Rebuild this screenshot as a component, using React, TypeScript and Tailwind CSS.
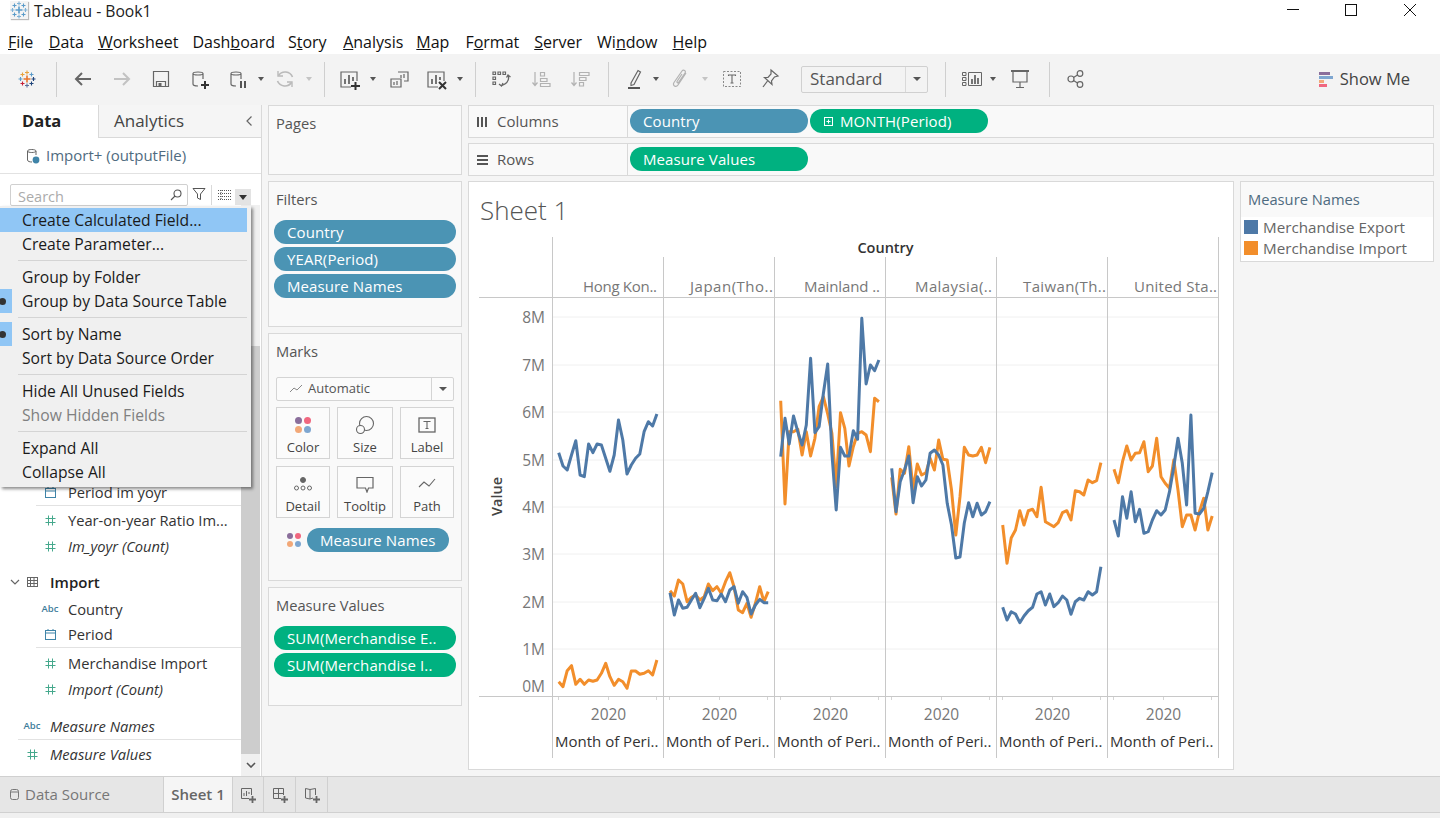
import type { ReactNode } from "react";

const blue = "#4e79a7";
const orange = "#f28e2b";

const panes = [
  {
    x0: 558.7,
    name: "Hong Kon..",
    start: 583,
    end: 657,
    orange: [681.7, 686.7, 670.7, 665.7, 684.3, 679.3, 684.3, 680, 681.3, 680, 673.3, 663.3, 676.7, 685.3, 679.3, 681.7, 688.3, 671, 671, 674.3, 673.3, 670.7, 675, 660],
    blue: [452.7, 466, 470, 455, 440.7, 475, 476.7, 444, 452.7, 444, 445, 458.3, 471.3, 455, 420, 440, 474, 465, 458.3, 454, 431.7, 421.7, 426, 414],
  },
  {
    x0: 670,
    name: "Japan(Tho..",
    start: 690,
    end: 773,
    orange: [590.7, 596, 580, 584, 601.7, 597.3, 595, 600, 596.7, 584, 590.7, 586.7, 593.3, 581.7, 572.7, 586.7, 610, 612.7, 603.3, 617.3, 603.3, 586.7, 601.7, 591.7],
    blue: [592.7, 615, 600, 608.3, 607.3, 600, 593.3, 607.7, 598.3, 588.3, 600, 600.7, 594, 601.7, 590, 586.7, 603.3, 591.7, 597.3, 614, 605, 599.3, 602.7, 602.7],
  },
  {
    x0: 780.7,
    name: "Mainland ..",
    start: 804,
    end: 880,
    orange: [400.7, 504, 431.7, 431.7, 429.3, 455, 431.7, 456, 438.3, 406.7, 396.7, 414, 433.3, 486.7, 412.7, 428.3, 466, 446.7, 433.3, 431.7, 435, 451.7, 398.3, 401.7],
    blue: [456.7, 418.3, 444, 416, 431.7, 445, 425, 358.3, 432.7, 426.7, 393.3, 364, 453.3, 510, 447.3, 456, 456, 430.7, 439.3, 318.3, 384, 365, 370.7, 360],
  },
  {
    x0: 891.7,
    name: "Malaysia(..",
    start: 915,
    end: 992,
    orange: [477.3, 514, 469.3, 473.3, 446.7, 490, 464, 475, 472.7, 458.3, 470, 440, 459.3, 460, 490, 535, 496.7, 447.3, 455, 456, 455, 447.3, 462.7, 447.3],
    blue: [468.3, 511.7, 481.7, 470, 456, 502.7, 476.7, 486, 480, 453.3, 450, 455, 465, 503.3, 525, 558, 557, 523, 502.7, 516.7, 503.3, 515, 511.7, 501.7],
  },
  {
    x0: 1002.7,
    name: "Taiwan(Th..",
    start: 1023,
    end: 1106,
    orange: [525, 563.3, 538, 530, 510.7, 525, 510.7, 509.3, 516.7, 487.3, 521.7, 524.3, 526.7, 522.7, 512.7, 510.7, 520, 490.7, 491.7, 495, 480, 482.7, 480.7, 462.7],
    blue: [607.3, 620, 611.7, 614, 622.7, 616, 610.7, 607.3, 594, 591.7, 605, 594, 606.7, 602.7, 596, 600, 614.3, 601.7, 598.3, 600, 591.7, 595, 591.7, 566.7],
  },
  {
    x0: 1114,
    name: "United Sta..",
    start: 1134,
    end: 1217,
    orange: [469.3, 482.7, 461.7, 446, 460, 453.3, 452.7, 441.7, 471.7, 466, 438.3, 476.7, 483.3, 488.3, 460, 490, 526.7, 515, 515, 530, 511.7, 498.3, 530, 516],
    blue: [520, 536, 496.7, 518.3, 491.7, 521.7, 509.3, 533.3, 531.7, 520, 510.7, 515, 510, 491.7, 466.7, 438.3, 463.3, 505, 415, 513.3, 514, 508.3, 491.7, 472.7],
  },
];

const yAxis = [
  ["8M", 322],
  ["7M", 370],
  ["6M", 417],
  ["5M", 465],
  ["4M", 512],
  ["3M", 559],
  ["2M", 607],
  ["1M", 654],
  ["0M", 691],
] as const;

const points = (x0: number, ys: number[]) =>
  ys.map((y, i) => `${(x0 + i * 4.27).toFixed(1)},${y}`).join(" ");

const Cross = ({ x, y, s, c }: { x: number; y: number; s: number; c: string }) => (
  <path d={`M${x - s} ${y}H${x + s}M${x} ${y - s}V${y + s}`} stroke={c} strokeWidth={s > 2.5 ? 1.6 : 1.1} fill="none" />
);

const TableauLogo = ({ mono }: { mono?: boolean }) => (
  <svg width="18" height="18" viewBox="0 0 18 18">
    <Cross x={9} y={9} s={3.5} c={mono ? "#5a9bc9" : "#e8762c"} />
    <Cross x={9} y={2.5} s={2} c={mono ? "#7fb2d6" : "#e8a33d"} />
    <Cross x={9} y={15.5} s={2} c={mono ? "#7fb2d6" : "#5b6f9b"} />
    <Cross x={2.5} y={9} s={2} c={mono ? "#7fb2d6" : "#5a9bc9"} />
    <Cross x={15.5} y={9} s={2} c={mono ? "#7fb2d6" : "#1f447b"} />
    <Cross x={4.5} y={4.5} s={2} c={mono ? "#5a9bc9" : "#e8a33d"} />
    <Cross x={13.5} y={4.5} s={2} c={mono ? "#5a9bc9" : "#5a9bc9"} />
    <Cross x={4.5} y={13.5} s={2} c={mono ? "#5a9bc9" : "#c72037"} />
    <Cross x={13.5} y={13.5} s={2} c={mono ? "#5a9bc9" : "#1f447b"} />
  </svg>
);

const Ic = ({ children, w = 24, o = 1 }: { children: ReactNode; w?: number; o?: number }) => (
  <svg width={w} height="24" viewBox={`0 0 ${w} 24`} fill="none" stroke="#666" strokeWidth="1.2" opacity={o} className="shrink-0">
    {children}
  </svg>
);

const Arrow = ({ ml, faded }: { ml: string; faded?: boolean }) => (
  <span className={`${ml} w-2 flex justify-center`}>
    <span className={`w-0 h-0 border-x-[3.5px] border-x-transparent border-t-[4px] ${faded ? "border-t-[#c4c4c4]" : "border-t-[#555]"}`} />
  </span>
);

const Sep = ({ ml }: { ml: string }) => <span className={`${ml} w-px h-[35px] bg-[#cfcfcf]`} />;

const DbIcon = ({ children }: { children: ReactNode }) => (
  <Ic>
    <path d="M5 6.5C5 4.5 15 4.5 15 6.5V12M5 6.5C5 8.5 15 8.5 15 6.5M5 6.5V17C5 18.5 7 19 10 19" />
    {children}
  </Ic>
);

const Menu = () => {
  const Item = ({ t, on, dim, mark }: { t: string; on?: boolean; dim?: boolean; mark?: boolean }) => (
    <div className={`relative h-6 pl-[22px] pt-[2px] flex items-center text-[15.7px] ${on ? "bg-[#90c6f5] mr-1" : ""} ${dim ? "text-[#808080]" : "text-[#1a1a1a]"}`}>
      {mark && (
        <span className="absolute left-0 top-0 w-3 h-6 bg-[#90c6f5] flex items-center">
          <span className="w-[7px] h-[7px] -ml-[1px] rounded-full bg-[#333]" />
        </span>
      )}
      {t}
    </div>
  );
  const Line = () => <div className="h-px bg-[#d4d4d4] ml-[18px] mr-[4px] my-[4px]" />;
  return (
    <div className="absolute left-0 top-[101px] w-[251px] h-[281px] z-20 bg-[#f0f0f0] pt-[2px] shadow-[2px_2px_3px_rgba(0,0,0,0.45)] leading-none">
      <Item t="Create Calculated Field..." on />
      <Item t="Create Parameter..." />
      <Line />
      <Item t="Group by Folder" />
      <Item t="Group by Data Source Table" mark />
      <Line />
      <Item t="Sort by Name" mark />
      <Item t="Sort by Data Source Order" />
      <Line />
      <Item t="Hide All Unused Fields" />
      <Item t="Show Hidden Fields" dim />
      <Line />
      <Item t="Expand All" />
      <Item t="Collapse All" />
    </div>
  );
};

const TypeIcon = ({ type }: { type: string }) => {
  if (type === "abc") return <span className="text-[9.5px] font-semibold text-[#3f7d9b]">Abc</span>;
  if (type === "date")
    return (
      <svg width="11" height="11" viewBox="0 0 11 11" fill="none" stroke="#3f84a8">
        <rect x="0.5" y="1.5" width="10" height="9" />
        <path d="M0.5 4H10.5M3 0V2M8 0V2" />
      </svg>
    );
  return (
    <svg width="11" height="11" viewBox="0 0 11 11" fill="none" stroke="#45a88c">
      <path d="M0.5 3.5H10.5M0.5 7.5H10.5M3.5 0.5V10.5M7.5 0.5V10.5" />
    </svg>
  );
};

const Field = ({ type, name, italic, line, indent = true }: { type: string; name: string; italic?: boolean; line?: boolean; indent?: boolean }) => (
  <div className={`h-[26px] flex items-center border-[#e2e2e2] ${indent ? "ml-9" : "ml-[18px]"} ${line ? "border-b" : ""}`}>
    <span className="ml-[3px] w-[22px] flex justify-center">
      <TypeIcon type={type} />
    </span>
    <span className={`ml-[7px] text-[14.7px] text-[#333] whitespace-nowrap ${italic ? "italic" : ""}`}>{name}</span>
  </div>
);

const DataPanel = () => (
  <div className="relative w-[262px] h-full bg-white border-r border-[#d9d9d9] flex flex-col shrink-0">
    <div className="h-[33px] flex shrink-0">
      <div className="w-[98px] pl-[22px] flex items-center text-[16.5px] font-bold text-[#222]">Data</div>
      <div className="flex-1 flex items-center justify-between pl-[15px] pr-2 bg-[#f5f5f5] border-l border-b border-[#d9d9d9] text-[17px] text-[#444]">
        Analytics
        <svg width="8" height="12" viewBox="0 0 8 12" fill="none" stroke="#666" strokeWidth="1.2">
          <path d="M6.5 1.5L2 6L6.5 10.5" />
        </svg>
      </div>
    </div>
    <div className="h-9 shrink-0 border-b border-[#e2e2e2] flex items-center pl-[26px] text-[15px] text-[#4f6b80]">
      <svg width="14" height="16" viewBox="0 0 14 16" fill="none" stroke="#666" className="mr-[6px]">
        <path d="M1.5 3C1.5 1 10 1 10 3V7M1.5 3C1.5 5 10 5 10 3M1.5 3V12C1.5 13.5 4 14 6 14" />
        <circle cx="10" cy="12" r="3.4" fill="#3f84a8" stroke="none" />
      </svg>
      Import+ (outputFile)
    </div>
    <div className="mt-[10px] h-[21px] shrink-0 flex items-start pl-[10px]">
      <div className="w-[178px] h-[22px] border border-[#d0d0d0] rounded-[2px] pl-[7px] pr-[5px] flex items-center justify-between text-[14.5px] text-[#ababab]">
        <span className="pt-1 leading-none">Search</span>
        <svg width="12" height="12" viewBox="0 0 12 12" fill="none" stroke="#555" strokeWidth="1.1">
          <circle cx="7.5" cy="4.5" r="3.5" />
          <path d="M5 7L1 11" />
        </svg>
      </div>
      <svg width="14" height="14" viewBox="0 0 14 14" fill="none" stroke="#555" className="ml-[4px] mt-[3px]">
        <path d="M1 1.5H13L8.5 7V12.5L5.5 11V7Z" />
      </svg>
      <span className="ml-[5px] mt-[1px] w-px h-5 bg-[#d9d9d9]" />
      <svg width="13" height="10" viewBox="0 0 13 10" stroke="#555" className="ml-[6px] mt-[6px]">
        <path d="M0 .5H13M0 3.5H13M0 6.5H13M0 9.5H13M3 0V10" strokeDasharray="1 1" />
      </svg>
      <span className="ml-[4px] mt-[5px] w-4 h-4 bg-[#e3e3e3] flex justify-center pt-[6px]">
        <span className="w-0 h-0 border-x-[4px] border-x-transparent border-t-[5px] border-t-[#333]" />
      </span>
    </div>
    <div className="flex-1 flex min-h-0">
      <div className="w-[241px] pt-[275px]">
        <Field type="date" name="Period im yoyr" line />
        <div className="h-px" />
        <Field type="num" name="Year-on-year Ratio Im..." />
        <Field type="num" name="Im_yoyr (Count)" italic />
        <div className="h-[10px]" />
        <div className="h-[26px] flex items-center pl-[10px]">
          <svg width="10" height="6" viewBox="0 0 10 6" fill="none" stroke="#666" strokeWidth="1.2">
            <path d="M1 1L5 5L9 1" />
          </svg>
          <svg width="11" height="10" viewBox="0 0 11 10" fill="none" stroke="#666" className="ml-[7px]">
            <rect x="0.5" y="0.5" width="10" height="9" />
            <path d="M0.5 3.5H10.5M0.5 6.5H10.5M3.5 .5V9.5M7 .5V9.5" />
          </svg>
          <span className="ml-3 text-[15px] font-semibold text-[#222]">Import</span>
        </div>
        <div className="h-px" />
        <Field type="abc" name="Country" />
        <Field type="date" name="Period" line />
        <div className="h-[2px]" />
        <Field type="num" name="Merchandise Import" />
        <Field type="num" name="Import (Count)" italic />
        <div className="h-3" />
        <Field type="abc" name="Measure Names" italic indent={false} line />
        <div className="h-px" />
        <Field type="num" name="Measure Values" italic indent={false} />
      </div>
      <div className="w-[19px] bg-[#f0f0f0] flex flex-col">
        <div className="h-[141px]" />
        <div className="h-[408px] bg-[#cdcdcd]" />
        <div className="h-[21px] flex items-center justify-center">
          <svg width="10" height="6" viewBox="0 0 10 6" fill="none" stroke="#555" strokeWidth="1.6">
            <path d="M1 1L5 5L9 1" />
          </svg>
        </div>
      </div>
    </div>
    <Menu />
  </div>
);

const Pill = ({ t, green, w, children }: { t: string; green?: boolean; w: string; children?: ReactNode }) => (
  <div className={`${w} h-6 rounded-full flex items-center pl-[13px] text-[15px] tracking-[0.1px] text-white whitespace-nowrap overflow-hidden ${green ? "bg-[#00b180]" : "bg-[#4b94b4]"}`}>
    {children}
    {t}
  </div>
);

const Card = ({ title, className, children }: { title: string; className: string; children?: ReactNode }) => (
  <div className={`border border-[#d9d9d9] bg-[#f9f9f9] px-[5px] ${className}`}>
    <div className="h-[34px] pl-[2px] flex items-center text-[14.7px] text-[#555]">{title}</div>
    {children}
  </div>
);

const Dots = ({ s = 8 }: { s?: number }) => (
  <span className="grid grid-cols-2 gap-[2px]">
    {["#8a6e9b", "#f0677f", "#f2a878", "#7ea6d0"].map((c) => (
      <span key={c} className="rounded-full" style={{ width: s, height: s, background: c }} />
    ))}
  </span>
);

const MarkCell = ({ label, children }: { label: string; children: ReactNode }) => (
  <div className="h-[52px] border border-[#d4d4d4] bg-[#fbfbfb] flex flex-col items-center pt-[5px] text-[13px] leading-none text-[#444]">
    <span className="h-[24px] flex items-center">{children}</span>
    <span className="mt-1">{label}</span>
  </div>
);

const MarksCard = () => (
  <Card title="Marks" className="h-[248px]">
    <div className="mx-[2px] mt-[9px] h-6 border border-[#d4d4d4] rounded-[2px] bg-[#fbfbfb] flex items-center text-[13px] text-[#555]">
      <svg width="14" height="10" viewBox="0 0 14 10" fill="none" stroke="#888" className="ml-[12px] mr-[5px]">
        <path d="M1 8L5 4L8 6L13 1" />
      </svg>
      <span className="flex-1">Automatic</span>
      <span className="w-[22px] h-full border-l border-[#d4d4d4] flex items-center justify-center">
        <span className="w-0 h-0 border-x-[4px] border-x-transparent border-t-[4px] border-t-[#555]" />
      </span>
    </div>
    <div className="mx-[2px] mt-[6px] grid grid-cols-[54px_56px_54px] gap-[7px]">
      <MarkCell label="Color">
        <Dots s={7} />
      </MarkCell>
      <MarkCell label="Size">
        <svg width="20" height="20" viewBox="0 0 20 20" fill="none" stroke="#666" strokeWidth="1.1">
          <circle cx="11.5" cy="8.5" r="7" />
          <circle cx="5.5" cy="14.5" r="4" fill="#fbfbfb" />
        </svg>
      </MarkCell>
      <MarkCell label="Label">
        <svg width="18" height="16" viewBox="0 0 18 16" fill="none" stroke="#666" strokeWidth="1.3">
          <rect x="1" y="1" width="16" height="14" />
          <path d="M6 5V4.5H12V5M9 4.5V11.5M7.5 11.5H10.5" strokeWidth="1.1" />
        </svg>
      </MarkCell>
      <MarkCell label="Detail">
        <svg width="20" height="16" viewBox="0 0 20 16" fill="none" stroke="#666">
          <circle cx="10" cy="4" r="2.5" fill="#666" />
          <circle cx="3.5" cy="12" r="2" />
          <circle cx="10" cy="12" r="2" />
          <circle cx="16.5" cy="12" r="2" />
        </svg>
      </MarkCell>
      <MarkCell label="Tooltip">
        <svg width="18" height="17" viewBox="0 0 18 17" fill="none" stroke="#666" strokeWidth="1.2">
          <path d="M1 1.5H17V12H12.5L11 16L9.5 12H1Z" />
        </svg>
      </MarkCell>
      <MarkCell label="Path">
        <svg width="18" height="12" viewBox="0 0 18 12" fill="none" stroke="#666" strokeWidth="1.1">
          <path d="M1 9L6 4L11 8L17 1" />
        </svg>
      </MarkCell>
    </div>
    <div className="mt-[10px] flex items-center pl-[13px] gap-[6px]">
      <Dots s={6} />
      <Pill t="Measure Names" w="w-[142px]" />
    </div>
  </Card>
);

const Shelf = ({ label, icon, children }: { label: string; icon: ReactNode; children: ReactNode }) => (
  <div className="h-[33px] border border-[#d9d9d9] bg-[#f9f9f9] flex items-center">
    <div className="w-[159px] h-full border-r border-[#d9d9d9] flex items-center pl-[8px] text-[15px] text-[#555]">
      <span className="w-[20px] flex">{icon}</span>
      {label}
    </div>
    <div className="pl-[2px] -mt-px flex gap-[2px]">{children}</div>
  </div>
);

const Chart = () => (
  <svg width="764" height="538" viewBox="469 231 764 538" fontFamily="'Open Sans', sans-serif" className="block">
    {yAxis.slice(0, 8).map(([, b], i) => (
      <line key={i} x1="552" x2="1218" y1={b - 5} y2={b - 5} stroke="#f0f0f0" />
    ))}
    {[552, 1218].map((x) => (
      <line key={x} x1={x + 0.5} x2={x + 0.5} y1="237" y2="758" stroke="#c8c8c8" />
    ))}
    {[663, 774, 885, 996, 1107].map((x) => (
      <line key={x} x1={x + 0.5} x2={x + 0.5} y1="257" y2="758" stroke="#c8c8c8" />
    ))}
    <line x1="479" x2="1219" y1="297.5" y2="297.5" stroke="#c8c8c8" />
    <line x1="479" x2="1219" y1="696.5" y2="696.5" stroke="#c8c8c8" />
    <text x="885.5" y="253" textAnchor="middle" fontSize="14.5" fontWeight="600" fill="#333">
      Country
    </text>
    {yAxis.map(([t, b]) => (
      <text key={t} x="545" y={b + 0.5} textAnchor="end" fontSize="15.5" fill="#777">
        {t}
      </text>
    ))}
    <text transform="translate(502 516) rotate(-90)" fontSize="14.5" fontWeight="600" fill="#444">
      Value
    </text>
    {panes.map((p, i) => {
      const left = 552 + i * 111;
      return (
        <g key={p.name}>
          <text x={p.start} y="292" fontSize="15" fill="#777" textLength={p.end - p.start} lengthAdjust="spacing">
            {p.name}
          </text>
          <path d={`M${left + 6.5} 697V700M${left + 56.5} 697V700M${left + 104.5} 697V700`} stroke="#d4d4d4" />
          <text x={left + 56.5} y="720" textAnchor="middle" fontSize="15.5" fill="#777">
            2020
          </text>
          <text x={left + 3} y="747" fontSize="15" fill="#333">
            Month of Peri..
          </text>
          <polyline points={points(p.x0, p.orange)} fill="none" stroke={orange} strokeWidth="3" strokeLinejoin="round" />
          <polyline points={points(p.x0, p.blue)} fill="none" stroke={blue} strokeWidth="3" strokeLinejoin="round" />
        </g>
      );
    })}
  </svg>
);

const menuItems: [ReactNode, string][] = [
  [<><u>F</u>ile</>, "ml-2"],
  [<><u>D</u>ata</>, "ml-[15.5px]"],
  [<><u>W</u>orksheet</>, "ml-[14px]"],
  [<>Dash<u>b</u>oard</>, "ml-[14px]"],
  [<>S<u>t</u>ory</>, "ml-[13px]"],
  [<><u>A</u>nalysis</>, "ml-[16.5px]"],
  [<><u>M</u>ap</>, "ml-[13px]"],
  [<>F<u>o</u>rmat</>, "ml-4"],
  [<><u>S</u>erver</>, "ml-[15px]"],
  [<>Wi<u>n</u>dow</>, "ml-[15px]"],
  [<><u>H</u>elp</>, "ml-[15px]"],
];

const Toolbar = () => (
  <div className="h-[51px] bg-[#f3f3f3] flex items-center shrink-0 pl-[18px] pb-px">
    <TableauLogo />
    <Sep ml="ml-[20px]" />
    <span className="ml-[14px]">
      <Ic>
        <path d="M20 12H5M11 6L5 12L11 18" stroke="#666" strokeWidth="2" />
      </Ic>
    </span>
    <span className="ml-[15px]">
      <Ic o={0.45}>
        <path d="M4 12H19M13 6L19 12L13 18" stroke="#888" strokeWidth="2" />
      </Ic>
    </span>
    <span className="ml-[15px]">
      <Ic>
        <path d="M4.5 4.5H19.5V19.5H4.5ZM7.5 19.5V14.5H16.5V19.5" />
        <rect x="9.5" y="16" width="3" height="3" fill="#666" stroke="none" />
      </Ic>
    </span>
    <span className="ml-[15px]">
      <DbIcon>
        <path d="M13 18H21M17 14V22" strokeWidth="2" stroke="#333" />
      </DbIcon>
    </span>
    <span className="ml-[14px]">
      <DbIcon>
        <path d="M15 14V21M19 14V21" strokeWidth="2" stroke="#555" />
      </DbIcon>
    </span>
    <Arrow ml="ml-[7px]" />
    <span className="ml-[8px]">
      <Ic o={0.4}>
        <path d="M19.5 10A8 8 0 0 0 5.5 8.5M4.5 14A8 8 0 0 0 18.5 15.5" strokeWidth="1.6" />
        <path d="M5 4V9H10M19 20V15H14" strokeWidth="1.4" />
      </Ic>
    </span>
    <Arrow ml="ml-[8px]" faded />
    <Sep ml="ml-[11px]" />
    <span className="ml-[12px]">
      <Ic>
        <path d="M14 20H4V5H20V14" />
        <path d="M8 17V12M12 17V8M16 14V10" strokeWidth="1.8" />
        <path d="M14 19H23M18.5 15V23" stroke="#333" strokeWidth="2" />
      </Ic>
    </span>
    <Arrow ml="ml-[8px]" />
    <span className="ml-[10px]">
      <Ic>
        <path d="M11 5H21V14H17M4 12H14V20H4Z" />
        <path d="M14 11V8M17 11V7M7 18V15M10 18V14" />
      </Ic>
    </span>
    <span className="ml-[13px]">
      <Ic>
        <path d="M14 20H4V5H20V14" />
        <path d="M8 17V12M12 17V8M16 13V10" strokeWidth="1.8" />
        <path d="M15 15L22 22M22 15L15 22" stroke="#333" strokeWidth="2" />
      </Ic>
    </span>
    <Arrow ml="ml-[8px]" />
    <Sep ml="ml-[11px]" />
    <span className="ml-[13px]">
      <Ic>
        <path d="M4 5H6.5V7.5H4ZM9 5H11.5V7.5H9ZM14 5H16.5V7.5H14ZM4 10H6.5V12.5H4ZM4 15H6.5V17.5H4Z" />
        <path d="M19 8C20.5 12 19 16 13 18.5M10 17L12.5 19L14 16M17.5 10.5L19 8L21.5 10" strokeWidth="1.3" />
      </Ic>
    </span>
    <span className="ml-[16px]">
      <Ic o={0.6}>
        <path d="M6 5V18M3.5 15.5L6 18.5L8.5 15.5" stroke="#888" />
        <path d="M11.5 5.5H15.5V9H11.5ZM11.5 11.5H18V14.5H11.5ZM11.5 16.5H21V19.5H11.5Z" stroke="#888" />
      </Ic>
    </span>
    <span className="ml-[15px]">
      <Ic o={0.6}>
        <path d="M6 5V18M3.5 15.5L6 18.5L8.5 15.5" stroke="#888" />
        <path d="M11.5 5.5H21V8.5H11.5ZM11.5 10.5H18V13.5H11.5ZM11.5 15.5H15.5V19H11.5Z" stroke="#888" />
      </Ic>
    </span>
    <Sep ml="ml-[16px]" />
    <span className="ml-[14px]">
      <Ic>
        <path d="M8 16L15 3.5L17.5 5L11 17.5L8 18.5Z" />
        <path d="M5 21H17" stroke="#555" strokeWidth="2" />
      </Ic>
    </span>
    <Arrow ml="ml-[5px]" />
    <span className="ml-[9px]">
      <Ic o={0.45}>
        <path d="M17 6L9 18C7 21 3 18.5 5 15.5L13 4C14.5 2 17.5 4 16 6L9.5 15.5C9 16.5 7.5 15.5 8 14.5L13 7" />
      </Ic>
    </span>
    <Arrow ml="ml-[8px]" faded />
    <span className="ml-[11px]">
      <Ic>
        <path d="M3.5 4.5H20.5V19.5H3.5Z" strokeDasharray="2 1.5" stroke="#888" strokeWidth="1" />
        <path d="M8.5 9V8H15.5V9M12 8V16M10.5 16H13.5" strokeWidth="1.1" />
      </Ic>
    </span>
    <span className="ml-[13px]">
      <Ic>
        <path d="M14 3L21 9L17.5 10L14.5 14L15 17.5L7.5 10.5L11 10.5L14 7Z" />
        <path d="M10.5 14L6 20" />
      </Ic>
    </span>
    <div className="ml-[20px] w-[127px] h-[27px] border border-[#d0d0d0] rounded-[2px] flex items-center text-[17px] text-[#555]">
      <span className="flex-1 pl-[8px]">Standard</span>
      <span className="w-[22px] h-full border-l border-[#d9d9d9] flex items-center justify-center">
        <span className="w-0 h-0 border-x-[4px] border-x-transparent border-t-[4px] border-t-[#555]" />
      </span>
    </div>
    <Sep ml="ml-[17px]" />
    <span className="ml-[14px]">
      <Ic>
        <path d="M2.5 5.5H6V8.5H2.5ZM2.5 10.5H6V13.5H2.5ZM2.5 15.5H6V18.5H2.5ZM8.5 5.5H21.5V18.5H8.5Z" strokeWidth="1" />
        <path d="M12 17V12M15 17V8M18 17V11" strokeWidth="1.8" />
      </Ic>
    </span>
    <Arrow ml="ml-[5px]" />
    <span className="ml-[11px]">
      <Ic>
        <path d="M3 4H21" strokeWidth="2" />
        <path d="M5 5V15H19V5M12 15V20M8 20.5H16" />
      </Ic>
    </span>
    <Sep ml="ml-[17px]" />
    <span className="ml-[14px]">
      <Ic>
        <circle cx="7" cy="12" r="3" />
        <circle cx="16" cy="6.5" r="2.8" />
        <circle cx="16" cy="17.5" r="2.8" />
        <path d="M9.5 10.5L13.5 8M9.5 13.5L13.5 16" />
      </Ic>
    </span>
    <div className="ml-auto mr-[30px] flex items-center text-[16.5px] text-[#444]">
      <span className="flex flex-col gap-[1px] mr-[7px] w-[14px]">
        <span className="h-[3px] w-[11px] bg-[#8a6e9b]" />
        <span className="h-[3px] w-[14px] bg-[#7ea6d0]" />
        <span className="h-[3px] w-[5px] bg-[#f2a878]" />
        <span className="h-[3px] w-[8px] bg-[#f0677f]" />
      </span>
      Show Me
    </div>
  </div>
);

const App = () => {
  return (
    <div className="w-[1440px] h-[818px] overflow-hidden bg-white flex flex-col font-['Open_Sans',sans-serif]">
      <div className="h-5 flex items-center shrink-0">
        <span className="ml-[10px] mr-[6px] bg-[#f4f4f4] shadow-[1px_1px_1px_#bbb] flex">
          <TableauLogo mono />
        </span>
        <span className="pt-px text-[15.7px] leading-[18px] text-[#222]">Tableau - Book1</span>
        <svg width="153" height="20" viewBox="0 0 153 20" fill="none" stroke="#111" className="ml-auto">
          <path d="M0 9.5H12" />
          <rect x="58.5" y="4.5" width="11" height="11" strokeWidth="1" />
          <path d="M117 4L129 16M129 4L117 16" />
        </svg>
      </div>
      <div className="h-[34px] pt-[10px] flex items-center shrink-0 text-[16px] text-[#111]">
        {menuItems.map(([t, ml], i) => (
          <span key={i} className={ml}>
            {t}
          </span>
        ))}
      </div>
      <Toolbar />
      <div className="h-[671px] bg-[#f5f5f5] flex shrink-0">
        <DataPanel />
        <div className="ml-[6px] w-[194px] flex flex-col gap-[6px] shrink-0">
          <Card title="Pages" className="h-[70px]" />
          <Card title="Filters" className="h-[146px]">
            <div className="mt-1 flex flex-col gap-[3px]">
              <Pill t="Country" w="w-[182px]" />
              <Pill t="YEAR(Period)" w="w-[182px]" />
              <Pill t="Measure Names" w="w-[182px]" />
            </div>
          </Card>
          <MarksCard />
          <Card title="Measure Values" className="h-[119px]">
            <div className="mt-1 flex flex-col gap-[3px]">
              <Pill t="SUM(Merchandise E.." green w="w-[182px]" />
              <Pill t="SUM(Merchandise I.." green w="w-[182px]" />
            </div>
          </Card>
        </div>
        <div className="ml-[6px] w-[966px] flex flex-col gap-[5px] shrink-0">
          <Shelf
            label="Columns"
            icon={
              <svg width="11" height="11" viewBox="0 0 11 11" fill="#555">
                <path d="M0 1H2V11H0ZM4 1H6V11H4ZM8 1H10V11H8Z" />
              </svg>
            }
          >
            <Pill t="Country" w="w-[178px]" />
            <Pill t="MONTH(Period)" green w="w-[178px]">
              <svg width="11" height="11" viewBox="0 0 11 11" fill="none" stroke="#fff" className="mr-[6px]">
                <rect x="1.5" y="1.5" width="8" height="8" />
                <path d="M3.5 5.5H7.5M5.5 3.5V7.5" />
              </svg>
            </Pill>
          </Shelf>
          <Shelf
            label="Rows"
            icon={
              <svg width="11" height="11" viewBox="0 0 11 11" fill="#555">
                <path d="M0 1H11V3H0ZM0 5H11V7H0ZM0 9H11V11H0Z" />
              </svg>
            }
          >
            <Pill t="Measure Values" green w="w-[178px]" />
          </Shelf>
          <div className="flex gap-[6px] items-start">
            <div className="w-[766px] h-[589px] bg-white border border-[#d9d9d9]">
              <div className="h-[49px] pl-[11px] pb-1 flex items-end text-[26px] leading-[34px] font-light text-[#555]">Sheet 1</div>
              <Chart />
            </div>
            <div className="w-[194px] h-[81px] bg-white border border-[#d9d9d9]">
              <div className="h-[35px] bg-[#f9f9f9] pl-[7px] flex items-center text-[14.7px] text-[#4f6b80]">Measure Names</div>
              <div className="pl-[3px] text-[15.2px] text-[#666] flex flex-col gap-[1px]">
                <div className="h-5 flex items-center gap-[5px]">
                  <span className="w-[14px] h-[14px] bg-[#4e79a7]" />
                  Merchandise Export
                </div>
                <div className="h-5 flex items-center gap-[5px]">
                  <span className="w-[14px] h-[14px] bg-[#f28e2b]" />
                  Merchandise Import
                </div>
              </div>
            </div>
          </div>
        </div>
      </div>
      <div className="h-[37px] bg-[#e6e6e6] border-t border-b border-[#d0d0d0] flex shrink-0">
        <div className="w-[163px] pl-[10px] flex items-center text-[15px] text-[#777]">
          <svg width="9" height="11" viewBox="0 0 9 11" fill="none" stroke="#777" className="mr-[6px]">
            <rect x="0.5" y="0.5" width="8" height="10" rx="2" />
            <path d="M0.5 3H8.5" />
          </svg>
          Data Source
        </div>
        <div className="w-[69px] bg-[#f5f5f5] border-l border-[#d0d0d0] flex items-center justify-center text-[15px] font-semibold text-[#666]">Sheet 1</div>
        <div className="w-8 border-x border-[#d0d0d0] flex items-center justify-center">
          <svg width="16" height="16" viewBox="0 0 16 16" fill="none" stroke="#666">
            <path d="M9 11.5H1.5V1.5H11.5V8" />
            <path d="M4 9V6M6.5 9V4M9 7V5" />
            <path d="M9 12.5H16M12.5 9V16" strokeWidth="1.8" />
          </svg>
        </div>
        <div className="w-8 border-r border-[#d0d0d0] flex items-center justify-center">
          <svg width="16" height="16" viewBox="0 0 16 16" fill="none" stroke="#666">
            <path d="M9 11.5H1.5V1.5H11.5V8M1.5 6.5H11.5M6.5 1.5V11.5" />
            <path d="M9 12.5H16M12.5 9V16" strokeWidth="1.8" />
          </svg>
        </div>
        <div className="w-8 border-r border-[#d0d0d0] flex items-center justify-center">
          <svg width="16" height="16" viewBox="0 0 16 16" fill="none" stroke="#666">
            <path d="M9 11L6 12L1.5 11V1.5L6 2.5L11.5 1.5V8M6 2.5V12" />
            <path d="M9 12.5H16M12.5 9V16" strokeWidth="1.8" />
          </svg>
        </div>
      </div>
      <div className="flex-1 bg-[#f0f0f0]" />
    </div>
  );
};

export default App;
